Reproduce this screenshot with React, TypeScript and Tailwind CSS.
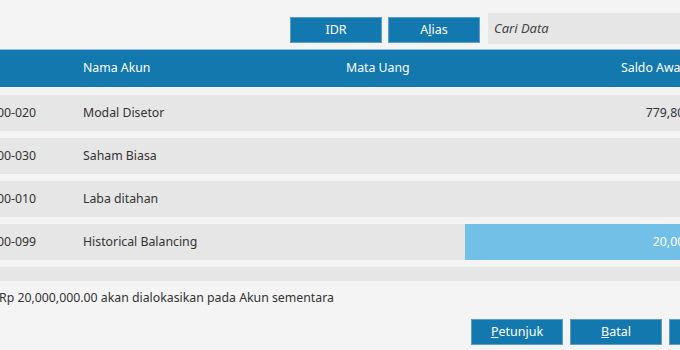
import React from "react";

const rows = [
  { code: "00-020", name: "Modal Disetor", saldo: "779,800,000.00", hl: false },
  { code: "00-030", name: "Saham Biasa", saldo: "", hl: false },
  { code: "00-010", name: "Laba ditahan", saldo: "", hl: false },
  { code: "00-099", name: "Historical Balancing", saldo: "20,000,000.00", hl: true },
];

function Btn({ children, w = "w-[92px]" }: { children: React.ReactNode; w?: string }) {
  return (
    <div
      className={`${w} h-[26px] flex items-center justify-center bg-[#1378ae] border border-[#5c9fca] text-white text-[12.5px]`}
    >
      {children}
    </div>
  );
}

export default function App() {
  return (
    <div
      className="w-[680px] h-[350px] overflow-hidden bg-[#f4f4f4] text-[#333333] text-[12.3px]"
      style={{ fontFamily: '"Noto Sans", "Open Sans", sans-serif' }}
    >
      <div className="w-[820px] ml-[-10px] flex flex-col">
        {/* top toolbar */}
        <div className="flex items-start pt-[13px] h-[48px]">
          <div className="w-[300px]" />
          <div className="flex gap-[6px] mt-[4px]">
            <Btn>IDR</Btn>
            <Btn>
              A<span className="underline">l</span>ias
            </Btn>
          </div>
          <div className="ml-[8px] w-[300px] h-[31px] bg-[#e6e6e6] flex items-center pl-[6px] italic text-[#444] text-[13px]">
            Cari Data
          </div>
        </div>

        {/* header */}
        <div className="mt-[1px] h-[38px] bg-[#1378ae] border-t border-[#8fbfdc] flex items-center text-white">
          <div className="w-[93px]" />
          <div className="w-[263px]">Nama Akun</div>
          <div className="w-[275px]">Mata Uang</div>
          <div>Saldo Awal</div>
        </div>

        {/* rows */}
        <div className="mt-[8px] flex flex-col gap-[7px]">
          {rows.map((r) => (
            <div key={r.code} className="h-[36px] bg-[#e6e6e6] flex items-stretch">
              <div className="w-[93px] pl-[7px] flex items-center pt-[1px]">{r.code}</div>
              <div className="w-[263px] flex items-center pt-[1px]">{r.name}</div>
              <div className="w-[119px]" />
              <div
                className={`w-[280px] flex items-center justify-end pr-[12px] pt-[1px] ${
                  r.hl ? "bg-[#72c0e8] text-white" : ""
                }`}
              >
                {r.saldo}
              </div>
            </div>
          ))}
          <div className="h-[14px] bg-[#e6e6e6]" />
        </div>

        {/* note */}
        <div className="mt-[9px] h-[17px] pl-[9px] flex items-center">
          Rp 20,000,000.00 akan dialokasikan pada Akun sementara
        </div>

        {/* bottom buttons */}
        <div className="mt-[12px] flex gap-[7px] pl-[481px]">
          <Btn>
            <span className="underline">P</span>etunjuk
          </Btn>
          <Btn>
            <span className="underline">B</span>atal
          </Btn>
          <Btn>
            <span className="underline">S</span>impan
          </Btn>
        </div>
      </div>
    </div>
  );
}
